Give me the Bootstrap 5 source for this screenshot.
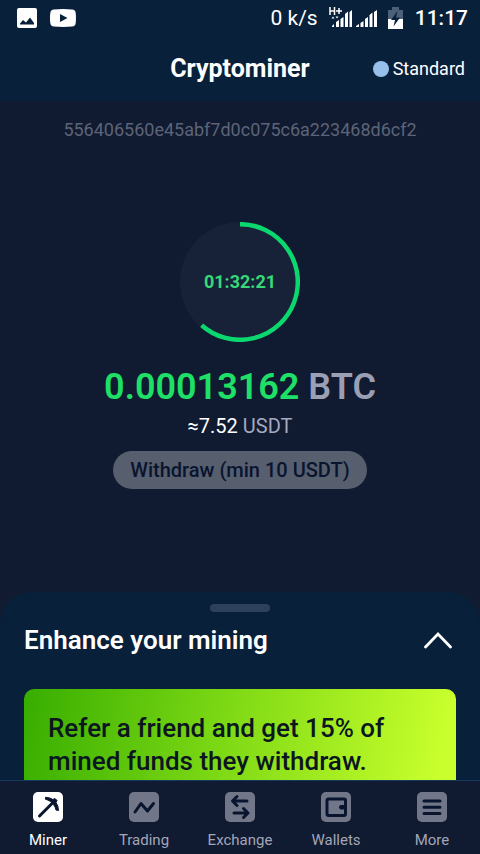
<!DOCTYPE html>
<html lang="en">
<head>
<meta charset="utf-8">
<meta name="viewport" content="width=device-width, initial-scale=1">
<title>Cryptominer</title>
<link href="https://cdn.jsdelivr.net/npm/bootstrap@5.3.0/dist/css/bootstrap.min.css" rel="stylesheet">
<style>
body{font-family:Roboto,"Liberation Sans",sans-serif;background:#101a30;color:#fff}
svg{display:block;flex:none}
.top-area{background:#09203b}
.status-bar{height:36px;font-size:21px;line-height:24px;padding:0 12px 0 17px}
.status-notes{gap:13px}
.status-clock{font-weight:500}
.title-bar{display:grid;grid-template-columns:1fr auto 1fr;height:65px;padding:0 15px}
.app-title{font-size:25px;line-height:32px;font-weight:700}
.plan-link{font-size:18px;line-height:24px;gap:4px;color:#fff}
.plan-dot{width:16px;height:16px;background:#96bfe9}
.account-id{font-size:18px;line-height:24px;color:#5c6478;padding-top:17px}
.timer-ring{width:120px;height:120px;margin-top:80px;display:grid;place-items:center}
.timer-ring>*{grid-area:1/1}
.timer-text{font-size:18px;line-height:24px;font-weight:700;color:#36d977}
.btc-amount{font-size:36px;line-height:44px;font-weight:600;color:#1fe066;margin-top:23px}
.btc-amount span{color:#9a9fb3}
.usd-amount{font-size:20px;line-height:24px;margin-top:5px}
.usd-amount span{color:#a5a9be}
.withdraw-btn{font-size:20px;line-height:24px;font-weight:500;padding:7px 17px;margin-top:13px;border:0}
.withdraw-btn:disabled{background:#575e6e;color:#09142f;opacity:1}
.sheet{flex:0 0 22vh;background:#09203b;border-radius:32px 32px 0 0;padding:12px 24px 0}
.grip{width:60px;height:8px;background:#2f415a}
.sheet-head{height:56px}
.sheet-title{font-size:26px;line-height:32px;font-weight:600}
.promo{margin-top:21px;border-radius:10px;padding:23px 24px;font-size:26px;line-height:33px;font-weight:500;color:#0b1620;background:linear-gradient(100deg,#37ad00,#7cd814 45%,#c8ff2c 95%)}
.tabs-bottom{background:#101a30;border-top:1px solid #17395f;height:74px}
.tab-link{color:#a2a6b8;font-size:15px;line-height:20px;padding-top:11px;gap:8px}
.tab-link.current{color:#fff}
.glyph{fill:none;stroke:#09142f;stroke-width:3;stroke-linecap:round;stroke-linejoin:round}
</style>
<script src="https://cdn.jsdelivr.net/npm/bootstrap@5.3.0/dist/js/bootstrap.bundle.min.js"></script>
</head>
<body class="vh-100 d-flex flex-column overflow-hidden">
<header class="top-area flex-shrink-0">
  <div class="status-bar d-flex align-items-center">
    <div class="status-notes d-flex align-items-center">
      <svg width="20" height="20" viewBox="0 0 20 20" aria-hidden="true"><rect width="20" height="20" rx="2" fill="#fff"/><path d="M3 16.500v-1l3-3.500 3 2.500 4-5 4 5.500v1.500z" fill="#09203b"/></svg>
      <svg width="26" height="20" viewBox="0 0 26 20" aria-hidden="true"><path d="M4 1.500Q13 .5 22 1.500q3.500.3 3.700 3.500.5 5 0 10-.2 3.200-3.700 3.500-9 .8-18 0Q.6 18.200.3 15q-.6-5 0-10Q.6 1.800 4 1.500z" fill="#fff"/><path d="M10 6l7.500 4L10 14z" fill="#09203b"/></svg>
    </div>
    <span class="ms-auto">0 k/s</span>
    <svg class="ms-2 me-1" width="54" height="24" viewBox="0 0 54 24" aria-hidden="true">
      <path d="M6 21v-1l2-2v3zM10 21v-5l3-2v7zM14.500 21v-8l3-2v10zM19 21V8l3-2.500V21zM23.500 21V6L26 4v17zM30 21v-1l3-2v3zM34.500 21v-4l3-2v6zM39 21v-8l3-2v10zM43.500 21V9l3-2.500V21zM48 21V6l3-2v17z" fill="#fff"/>
      <path d="M2 0h14v10.500H2z" fill="#09203b"/>
      <path d="M4 1v8M8.500 1v8M4 5h4.500M10 5h6M13 2v6" fill="none" stroke="#fff" stroke-width="1.500"/>
      <path d="M5.500 12.500l1.500-2 1.500 2zM9.500 10.500h3L11 12.500z" fill="#fff"/>
    </svg>
    <svg class="ms-1 me-2" width="15" height="22" viewBox="0 0 15 22" aria-hidden="true"><path d="M4 0h7v3h4v9H0V3h4z" fill="#4c6077"/><path d="M0 12h15v10H0z" fill="#fff"/><path d="M9.500 4L3 13h4l-1.500 6.500L12 10.500H8z" fill="#09203b"/></svg>
    <span class="status-clock ps-1">11:17</span>
  </div>
  <div class="title-bar align-items-center">
    <span></span>
    <h1 class="app-title m-0">Cryptominer</h1>
    <a href="#" class="plan-link d-flex align-items-center justify-content-end text-decoration-none"><span class="plan-dot rounded-circle"></span>Standard</a>
  </div>
</header>
<main class="flex-fill d-flex flex-column align-items-center text-center">
  <div class="account-id">556406560e45abf7d0c075c6a223468d6cf2</div>
  <div class="timer-ring">
    <svg width="120" height="120" viewBox="0 0 120 120" aria-hidden="true"><circle cx="60" cy="60" r="60" fill="#172137"/><path d="M60 2.200A57.800 57.800 0 1 1 21.600 103.200" fill="none" stroke="#0ad86e" stroke-width="4.500"/></svg>
    <span class="timer-text">01:32:21</span>
  </div>
  <div class="btc-amount">0.00013162 <span>BTC</span></div>
  <div class="usd-amount">≈7.52 <span>USDT</span></div>
  <button type="button" class="withdraw-btn btn rounded-pill" disabled>Withdraw (min 10 USDT)</button>
</main>
<section class="sheet overflow-hidden">
  <div class="grip rounded-pill mx-auto"></div>
  <div class="sheet-head d-flex align-items-center justify-content-between">
    <h2 class="sheet-title m-0">Enhance your mining</h2>
    <button type="button" class="btn border-0 p-0 me-1" aria-label="Expand"><svg width="28" height="18" viewBox="0 0 28 18"><path d="M1.500 16L14 3l12.500 13" fill="none" stroke="#fff" stroke-width="2.800" stroke-linecap="round"/></svg></button>
  </div>
  <div class="promo">Refer a friend and get 15% of mined funds they withdraw.</div>
</section>
<nav class="tabs-bottom d-flex flex-shrink-0" aria-label="Main">
  <a href="#" class="tab-link current col d-flex flex-column align-items-center text-decoration-none" aria-current="page">
    <svg width="30" height="30" viewBox="0 0 30 30" aria-hidden="true"><rect width="30" height="30" rx="5" fill="#fff"/><path d="M6.500 24L20 10.500" class="glyph"/><path d="M12.500 5.300Q17 5.500 20 7.500l2-1L24 8.500l-1 2Q25.500 14 25.500 18.500l-2.500-.5Q22.500 15 20.500 12.500l-3-3Q15 7.800 12.500 7.300z" fill="#09142f" stroke="#09142f" stroke-linejoin="round"/></svg>Miner</a>
  <a href="#" class="tab-link col d-flex flex-column align-items-center text-decoration-none">
    <svg width="30" height="30" viewBox="0 0 30 30" aria-hidden="true"><rect width="30" height="30" rx="5" fill="#717788"/><path d="M6 20l6-8.500 6.500 7.500 6-7.500" class="glyph"/></svg>Trading</a>
  <a href="#" class="tab-link col d-flex flex-column align-items-center text-decoration-none">
    <svg width="30" height="30" viewBox="0 0 30 30" aria-hidden="true"><rect width="30" height="30" rx="5" fill="#717788"/><path d="M22 9H8M12 4.500L7.500 9l4.500 4.500M9 21h14M18.500 16.500L23 21l-4.500 4.500" class="glyph"/></svg>Exchange</a>
  <a href="#" class="tab-link col d-flex flex-column align-items-center text-decoration-none">
    <svg width="30" height="30" viewBox="0 0 30 30" aria-hidden="true"><rect width="30" height="30" rx="5" fill="#717788"/><rect x="6" y="7" width="18.500" height="16.500" rx="1.500" class="glyph"/><path d="M19.500 13H24v4.500h-4.500q-1.500-.6-1.500-2.200t1.500-2.300z" fill="#09142f"/></svg>Wallets</a>
  <a href="#" class="tab-link col d-flex flex-column align-items-center text-decoration-none">
    <svg width="30" height="30" viewBox="0 0 30 30" aria-hidden="true"><rect width="30" height="30" rx="5" fill="#717788"/><path d="M7 9h16M7 15.200h16M7 21.500h16" class="glyph"/></svg>More</a>
</nav>
</body>
</html>
